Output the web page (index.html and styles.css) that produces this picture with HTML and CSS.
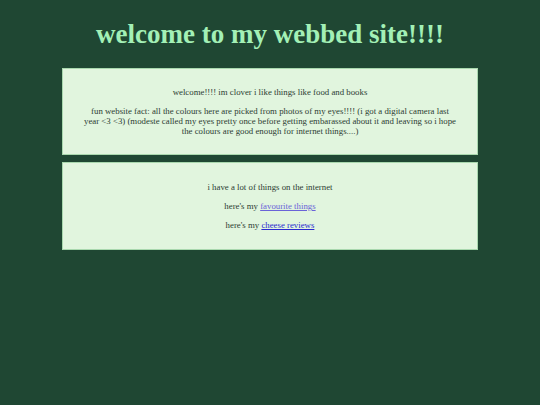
FILE: index.html
```html
<!DOCTYPE html>
<html>
<head>
<meta charset="utf-8">
<title>welcome to my webbed site!!!!</title>
<link rel="stylesheet" href="styles.css">
</head>
<body>
<h1 class="title">welcome to my webbed site!!!!</h1>
<div class="box">
  <p>welcome!!!! im clover i like things like food and books</p>
  <p>fun website fact: all the colours here are picked from photos of my eyes!!!! (i got a digital camera last year &lt;3 &lt;3) (modeste called my eyes pretty once before getting embarassed about it and leaving so i hope the colours are good enough for internet things....)</p>
</div>
<div class="box links">
  <p>i have a lot of things on the internet</p>
  <p>here's my <a class="visited" href="#fav">favourite things</a></p>
  <p>here's my <a class="link" href="#cheese">cheese reviews</a></p>
</div>
</body>
</html>
```
FILE: styles.css
```css
html, body {
  margin: 0;
  padding: 0;
  background: #1f4733;
}
body {
  font-family: "Liberation Serif", "Times New Roman", serif;
  padding-top: 1px;
}
.title {
  color: #a3f0b6;
  font-size: 27px;
  font-weight: bold;
  text-align: center;
  margin: 18px 0 18px;
}
.box {
  width: 374px;
  margin: 0 auto 7px;
  padding: 9px 20px;
  background: #e1f5de;
  border: 1px solid #a9d8ae;
  color: #2d3d33;
  font-size: 8.8px;
  line-height: 10px;
  text-align: center;
}
.box.links {
  padding: 10px 20px;
}
.box p {
  margin: 9px 0;
}
.visited {
  color: #6a63d8;
}
.link {
  color: #2a2ad0;
}
```
